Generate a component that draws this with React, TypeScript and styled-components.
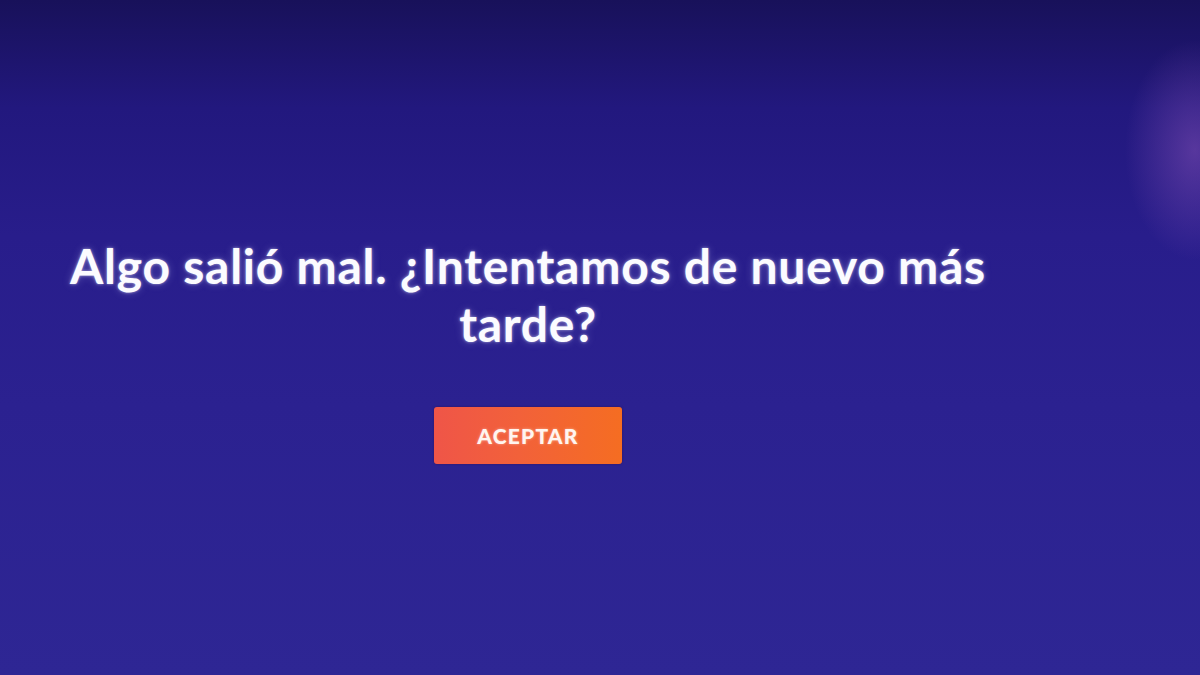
import React from "react";
import styled, { createGlobalStyle } from "styled-components";

const GlobalStyle = createGlobalStyle`
  html, body {
    margin: 0;
    padding: 0;
    height: 100%;
  }
  body {
    font-family: Lato, "Open Sans", "Liberation Sans", sans-serif;
  }
`;

const Screen = styled.div`
  width: 1200px;
  height: 675px;
  overflow: hidden;
  background:
    radial-gradient(ellipse 70px 110px at 1195px 150px, rgba(150, 90, 190, 0.45), rgba(120, 70, 180, 0) 100%),
    linear-gradient(180deg, #18115a 0%, #22187e 16%, #281d8b 35%, #2b2190 60%, #2e2694 100%);
  display: flex;
  flex-direction: column;
  align-items: center;
  padding: 237px 144px 0 0;
  box-sizing: border-box;
`;

const Dialog = styled.div`
  display: flex;
  flex-direction: column;
  align-items: center;
  gap: 54px;
  max-width: 980px;
`;

const Message = styled.h1`
  margin: 0;
  color: #fbfbff;
  font-size: 48px;
  font-weight: 700;
  line-height: 58px;
  text-align: center;
  letter-spacing: 0.75px;
  text-shadow: 0 0 3px rgba(255, 255, 255, 0.55), 0 0 8px rgba(200, 200, 255, 0.3);
`;

const Button = styled.button`
  width: 188px;
  height: 57px;
  border: none;
  border-radius: 3px;
  background: linear-gradient(90deg, #ef5548 0%, #f2613a 45%, #f56d22 100%);
  box-shadow: 0 0 2px rgba(60, 10, 40, 0.6);
  color: #fff5f0;
  font-family: Lato, "Liberation Sans", sans-serif;
  font-size: 21px;
  font-weight: 900;
  letter-spacing: 1.2px;
  text-shadow: 0 0 3px rgba(255, 255, 255, 0.45);
  cursor: pointer;
`;

export default function App() {
  return (
    <>
      <GlobalStyle />
      <Screen>
        <Dialog>
          <Message>Algo salió mal. ¿Intentamos de nuevo más tarde?</Message>
          <Button>ACEPTAR</Button>
        </Dialog>
      </Screen>
    </>
  );
}
